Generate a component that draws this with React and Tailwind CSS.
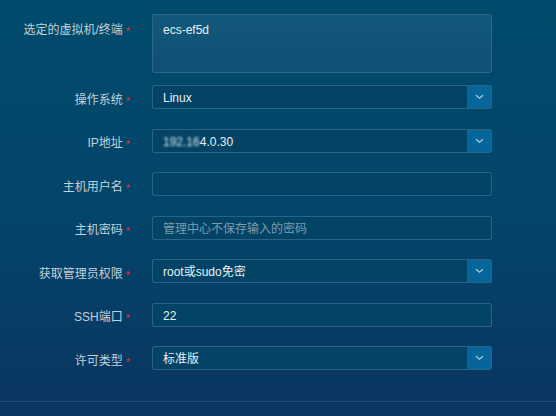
import React from 'react';

const font = { fontFamily: '"Liberation Sans", "Noto Sans CJK SC", sans-serif' };

const Label = ({ children, top }) => (
  <div
    className={`flex w-[130px] shrink-0 items-center justify-end text-[12px] leading-[16px] text-[#c3d1da] ${top ? 'pt-[8px] self-start' : 'pt-[5px]'}`}
  >
    <span>{children}</span>
    <span className="ml-[3px] mt-[3px] text-[11px] leading-none text-[#e2302e]">*</span>
  </div>
);

const Chevron = () => (
  <svg width="9" height="6" viewBox="0 0 9 6" fill="none">
    <path d="M1 1.2l3.5 3L8 1.2" stroke="#a8cce2" strokeWidth="1.3" />
  </svg>
);

const Select = ({ value }) => (
  <div className="flex h-[24px] w-[340px] items-stretch rounded-[2px] border border-[#2a6384] bg-[#034466]">
    <div className="flex flex-1 items-center pl-[10px] pt-[2px] text-[12px] text-[#e8f0f4]">{value}</div>
    <div className="flex w-[24px] items-center justify-center bg-[#06669c]">
      <Chevron />
    </div>
  </div>
);

const Input = ({ value, placeholder }) => (
  <div className="flex h-[24px] w-[340px] items-center rounded-[2px] border border-[#2a6384] bg-[#034466] pl-[10px] pt-[2px] text-[12px]">
    {value ? (
      <span className="text-[#e8f0f4]">{value}</span>
    ) : (
      <span className="text-[#7d9bad]">{placeholder}</span>
    )}
  </div>
);

const Row = ({ label, children }) => (
  <div className="flex items-center gap-[22px]">
    <Label>{label}</Label>
    {children}
  </div>
);

export default function App() {
  return (
    <div
      className="flex h-[416px] w-[556px] flex-col overflow-hidden bg-gradient-to-b from-[#004b6b] via-[#03456a] to-[#0a3561]"
      style={font}
    >
      <div className="flex flex-col pt-[14px]">
        <div className="flex gap-[22px]">
          <Label top>选定的虚拟机/终端</Label>
          <div className="h-[59px] w-[340px] rounded-[2px] border border-[#2c6788] bg-gradient-to-b from-[#12587b] to-[#0f5075] px-[10px] pt-[6px] text-[12px] text-[#e8f0f4]">
            ecs-ef5d
          </div>
        </div>

        <div className="mt-[12px] flex flex-col gap-[19.5px]">
          <Row label="操作系统">
            <Select value="Linux" />
          </Row>
          <Row label="IP地址">
            <Select
              value={
                <>
                  <span className="blur-[1.2px] text-[#dbe8f0]">192.16</span>
                  <span>4.0.30</span>
                </>
              }
            />
          </Row>
          <Row label="主机用户名">
            <Input />
          </Row>
          <Row label="主机密码">
            <Input placeholder="管理中心不保存输入的密码" />
          </Row>
          <Row label="获取管理员权限">
            <Select value="root或sudo免密" />
          </Row>
          <Row label="SSH端口">
            <Input value="22" />
          </Row>
          <Row label="许可类型">
            <Select value="标准版" />
          </Row>
        </div>
      </div>

      <div className="mt-[31px] h-px w-full bg-[#1b4d72]" />
    </div>
  );
}
